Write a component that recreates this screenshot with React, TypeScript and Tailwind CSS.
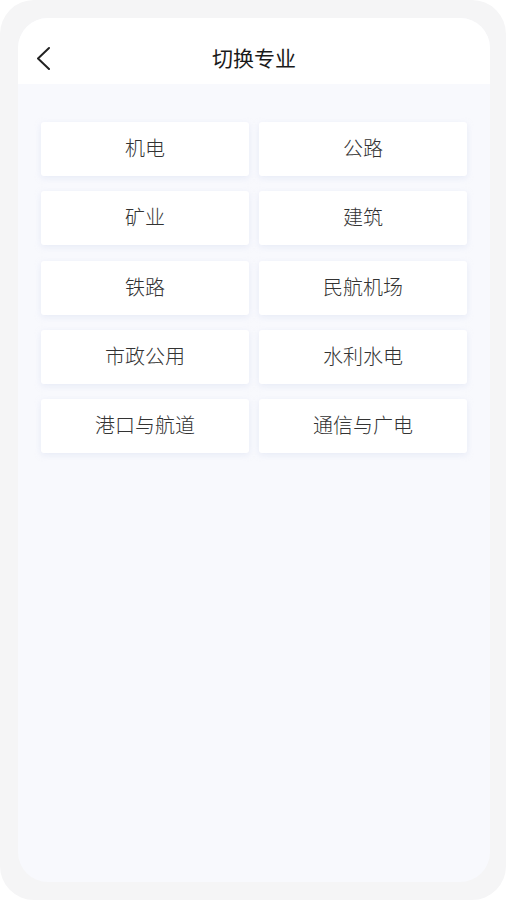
const majors = ['机电', '公路', '矿业', '建筑', '铁路', '民航机场', '市政公用', '水利水电', '港口与航道', '通信与广电'];

export default function App() {
  return (
    <div
      className="w-[506px] h-[900px] bg-white"
      style={{ fontFamily: '"Noto Sans CJK SC", "Noto Sans", sans-serif' }}
    >
      <div className="w-full h-full bg-[#f5f5f6] rounded-[34px] pl-[18px] pr-[16px] py-[18px]">
        <div className="h-full rounded-[30px] bg-[#f8f9fd] overflow-hidden flex flex-col">
          <div className="relative h-[66px] bg-white flex items-center justify-center shrink-0">
            <svg className="absolute left-[18px] top-[28px]" width="16" height="24" viewBox="0 0 16 24" fill="none">
              <polyline points="13,2 2,12.5 13,23" stroke="#222" strokeWidth="2" strokeLinecap="round" strokeLinejoin="round" />
            </svg>
            <span className="text-[21px] text-[#1a1a1a] mt-[14px]">切换专业</span>
          </div>
          <div className="grid grid-cols-2 gap-x-[10px] gap-y-[15.3px] px-[23px] pt-[38px]">
            {majors.map((m) => (
              <div
                key={m}
                className="h-[54px] bg-white rounded-[3px] flex items-center justify-center text-[20px] font-light text-[#333] shadow-[0_2px_6px_rgba(200,210,235,0.35)]"
              >
                <span className="-mt-[2px]">{m}</span>
              </div>
            ))}
          </div>
        </div>
      </div>
    </div>
  );
}
